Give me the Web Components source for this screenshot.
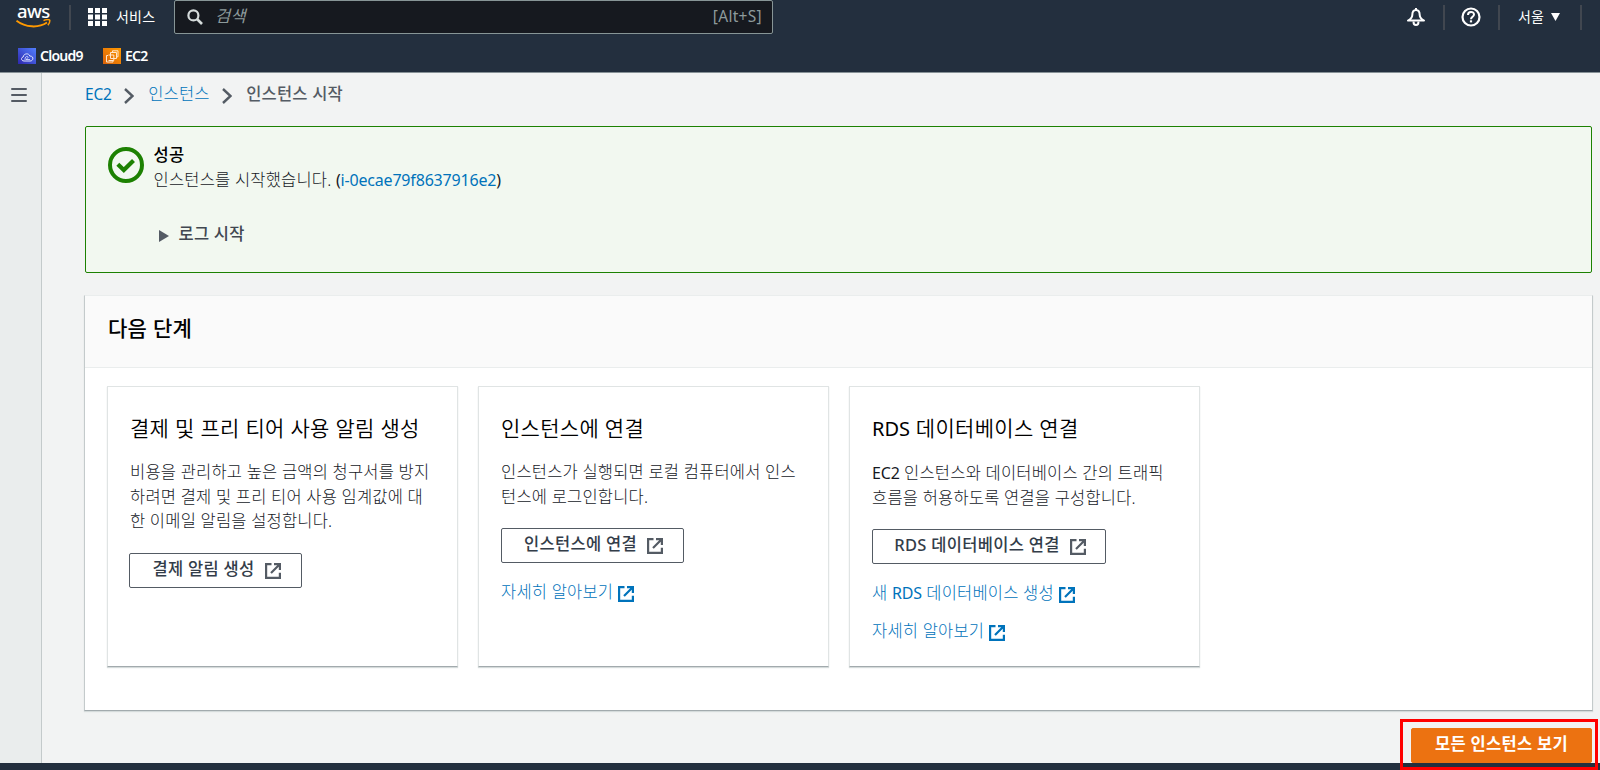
<!DOCTYPE html>
<html lang="ko">
<head>
<meta charset="utf-8">
<title>인스턴스 시작 | EC2</title>
<style>
    body {
        margin: 0;
        width: 1600px;
        height: 770px;
        overflow: hidden;
        background: #f2f3f3;
        color: #16191f;
        font: 300 16.5px/24.5px "Noto Sans", "Noto Sans CJK KR", sans-serif;
        letter-spacing: .2px;
    }
</style>
</head>
<body>
<console-app></console-app>

<script>
// SHARED BASE: EACH ELEMENT SUPPLIES ITS OWN TEMPLATE
class BaseElement extends HTMLElement {
    constructor() {
        super();
        this.attachShadow({ mode: 'open' });
        this.shadowRoot.innerHTML = this.template();
    }
}

// ICON PATHS, DRAWN WITH THE CURRENT TEXT COLOUR
const ICONS = {
    search: { box: '0 0 16 16', body: '<circle cx="6.4" cy="6.4" r="5" fill="none" stroke="currentColor" stroke-width="2.2"/><path d="M10 10l5 5" stroke="currentColor" stroke-width="2.6"/>' },
    grid: { box: '0 0 19 18', body: '<path fill="currentColor" d="M0 0h5v5H0zM7 0h5v5H7zM14 0h5v5h-5zM0 6.5h5v5H0zM7 6.5h5v5H7zM14 6.5h5v5h-5zM0 13h5v5H0zM7 13h5v5H7zM14 13h5v5h-5z"/>' },
    bell: { box: '0 0 20 20', body: '<path fill="none" stroke="currentColor" stroke-width="2" stroke-linejoin="round" d="M10 3C7.300 3 6.300 5 6.300 8c0 2.500-1.300 4-4.300 5.600h16c-3-1.600-4.300-3.100-4.300-5.600 0-3-1-5-3.700-5z"/><path fill="none" stroke="currentColor" stroke-width="2" d="M7.500 14.500c0 4.800 5 4.800 5 0M10 1v2"/>' },
    help: { box: '0 0 20 20', body: '<circle cx="10" cy="10" r="8.500" fill="none" stroke="currentColor" stroke-width="2.200"/><path fill="none" stroke="currentColor" stroke-width="2" d="M7 8c0-4 6-4 6-.4 0 2.200-3 2.200-3 4.700"/><path stroke="currentColor" stroke-width="2.200" d="M10 13.300v2.100"/>' },
    menu: { box: '0 0 16 14', body: '<path stroke="currentColor" stroke-width="2" stroke-linecap="round" d="M1 1h14M1 7h14M1 13h14"/>' },
    chevron: { box: '0 0 10 16', body: '<path fill="none" stroke="currentColor" stroke-width="2.400" d="M1 1l7.500 7L1 15"/>' },
    success: { box: '0 0 36 36', body: '<circle cx="18" cy="18" r="16" fill="none" stroke="currentColor" stroke-width="4"/><path fill="none" stroke="currentColor" stroke-width="4.200" d="M9.800 17.300l6 5.700 9.700-9.500"/>' },
    external: { box: '0 0 16 16', body: '<path fill="none" stroke="currentColor" stroke-width="2.200" d="M6.500 1.100H1.100v13.800h13.800V9.800"/><path fill="none" stroke="currentColor" stroke-width="2.200" d="M9 1.100h5.900V7M14.500 1.500L6 10"/>' },
    down: { box: '0 0 9 8', body: '<path fill="currentColor" d="M0 0h9L4.500 8z"/>' },
    right: { box: '0 0 10 12', body: '<path fill="currentColor" d="M0 0l10 6L0 12z"/>' },
    cloud9: { box: '0 0 18 16', body: '<defs><linearGradient id="c" x1="0" y1="1" x2="1" y2="0"><stop stop-color="#2e27ad"/><stop offset="1" stop-color="#527fff"/></linearGradient></defs><path fill="url(#c)" d="M0 0h18v16H0z"/><path fill="none" stroke="#dfe3ff" d="M6 13c-3 0-3.300-3.600-.8-4 .4-4 6-4 6.500-1 2.400-.1 3.800 1.500 3 3.400-.4 1-1.200 1.600-2.700 1.600z"/><path fill="none" stroke="#dfe3ff" stroke-width=".8" d="M7 12c0-3 1-3.500 2-3.500s1.500 1 .5 1.800L8 11.500h4"/>' },
    ec2: { box: '0 0 18 16', body: '<defs><linearGradient id="e" x1="0" y1="1" x2="1" y2="0"><stop stop-color="#d9620a"/><stop offset="1" stop-color="#ff9900"/></linearGradient></defs><path fill="url(#e)" d="M0 0h18v16H0z"/><path fill="none" stroke="#ffe6cc" d="M7.500 4.500h6v6h-6zM5.500 7h5.300v5.500H5.500M5 7.500H3.500v6.500H10V13M9.500 4V2.800H15v6h-1"/>' }
};

class UiIcon extends BaseElement {
    template() {
        const icon = ICONS[this.getAttribute('name')];
        const [, , width, height] = icon.box.split(' ');
        return `
            <style>
                :host { display: block; flex: none; }
                svg { display: block; }
            </style>
            <svg width="${width}" height="${height}" viewBox="${icon.box}">${icon.body}</svg>
        `;
    }
}

class AwsLogo extends BaseElement {
    template() {
        return `
            <style>
                :host { display: block; width: 35px; height: 24px; color: #fff; }
                .word { display: block; height: 14px; margin-left: 1px; font: 500 18.5px/11px "Noto Sans", sans-serif; letter-spacing: -.6px; }
                svg { display: block; }
            </style>
            <span class="word">aws</span>
            <svg width="35" height="10" viewBox="0 0 35 10">
                <path fill="none" stroke="#f90" stroke-width="2" d="M.5 1.700C9.500 8.700 22.500 9.200 31 3.500"/>
                <path fill="none" stroke="#f90" stroke-width="1.500" d="M27.500 1.600c3-1.300 6.200-1.200 6.300-.3.100 1.300-.8 3.700-1.900 5"/>
            </svg>
        `;
    }
}

class ConsoleNav extends BaseElement {
    template() {
        return `
            <style>
                :host { display: block; box-sizing: border-box; height: 73px; background: #232f3e; border-bottom: 1px solid #879196; color: #fff; }
                .top { display: flex; align-items: center; height: 34px; font-weight: 400; font-size: 14px; }
                aws-logo { margin-left: 16px; }
                .divider { width: 2px; height: 25px; background: #414750; }
                .services { display: flex; align-items: center; gap: 9px; margin: 0 17px; width: 69px; white-space: nowrap; }
                .search { display: flex; align-items: center; box-sizing: border-box; width: 599px; height: 34px; padding: 0 10px 0 12px; background: #16191f; border: 1px solid #879596; border-radius: 2px; color: #8d9a9b; }
                .search ui-icon { color: #d5dbdb; }
                .search i { flex: 1; margin-left: 12px; font-size: 16.5px; line-height: 24px; padding-bottom: 3px; }
                .search span { font-size: 15.5px; line-height: 24px; padding-bottom: 2px; letter-spacing: .3px; }
                .tools { display: flex; align-items: center; margin-left: auto; }
                .region { display: flex; align-items: center; gap: 7px; width: 82px; box-sizing: border-box; padding-left: 18px; margin-right: 18px; border-right: 2px solid #414750; height: 25px; }
                .favorites { display: flex; height: 38px; padding: 6px 0 0 18px; align-items: center; box-sizing: border-box; font-size: 14px; font-weight: 600; letter-spacing: -.75px; }
                .favorites ui-icon { margin-right: 4px; }
                .favorites span { width: 63px; line-height: 20px; padding-bottom: 1px; }
            </style>
            <div class="top">
                <aws-logo></aws-logo>
                <div class="divider" style="margin-left:18px"></div>
                <div class="services"><ui-icon name="grid"></ui-icon><span>서비스</span></div>
                <div class="search"><ui-icon name="search"></ui-icon><i>검색</i><span>[Alt+S]</span></div>
                <div class="tools">
                    <ui-icon name="bell"></ui-icon>
                    <div class="divider" style="margin:0 16px 0 17px"></div>
                    <ui-icon name="help"></ui-icon>
                    <div class="divider" style="margin-left:17px"></div>
                    <div class="region"><span>서울</span><ui-icon name="down"></ui-icon></div>
                </div>
            </div>
            <div class="favorites">
                <ui-icon name="cloud9"></ui-icon><span>Cloud9</span>
                <ui-icon name="ec2"></ui-icon><span>EC2</span>
            </div>
        `;
    }
}

class BreadcrumbTrail extends BaseElement {
    template() {
        return `
            <style>
                :host { display: flex; align-items: center; height: 24px; color: #545b64; }
                a { color: #0073bb; }
                .latin { font-weight: 400; font-size: 15.5px; letter-spacing: -.2px; padding-top: 1px; }
                ui-icon { margin: 3px 14.5px 0 12px; }
                b { font-weight: 500; }
            </style>
            <a class="latin">EC2</a><ui-icon name="chevron"></ui-icon>
            <a>인스턴스</a><ui-icon name="chevron"></ui-icon>
            <b>인스턴스 시작</b>
        `;
    }
}

class FlashMessage extends BaseElement {
    template() {
        return `
            <style>
                :host { display: flex; box-sizing: border-box; height: 147px; padding: 16px 22px; background: #f2f8f0; border: 1px solid #1d8102; border-radius: 2px; }
                ui-icon[name=success] { margin-top: 4px; color: #1d8102; }
                .text { margin-left: 9.5px; }
                .title, .log { font-weight: 500; }
                .title { color: #000; }
                .log { display: flex; align-items: center; gap: 10px; margin: 30px 0 0 5px; color: #414750; }
                .log ui-icon { margin-top: 3px; color: #545b64; }
            </style>
            <ui-icon name="success"></ui-icon>
            <div class="text">
                <div class="title">성공</div>
                <div><slot></slot></div>
                <div class="log"><ui-icon name="right"></ui-icon><span>로그 시작</span></div>
            </div>
        `;
    }
}

class UiButton extends BaseElement {
    template() {
        return `
            <style>
                :host { display: flex; align-items: center; justify-content: center; gap: 10px; box-sizing: border-box; height: 35px; padding: 0 0 2px 2px; border: 1px solid #545b64; border-radius: 2px; color: #333d49; font-weight: 500; letter-spacing: .3px; white-space: nowrap; }
                :host([primary]) { padding-left: 0; background: #ec7211; border-color: #ec7211; color: #fff; font-weight: 700; }
                ui-icon { margin-top: 3px; color: #545b64; }
            </style>
            <span><slot></slot></span>
            ${this.hasAttribute('primary') ? '' : '<ui-icon name="external"></ui-icon>'}
        `;
    }
}

class UiLink extends BaseElement {
    template() {
        return `
            <style>
                :host { display: flex; align-items: center; gap: 5px; height: 24px; color: #0073bb; white-space: nowrap; }
                ui-icon { margin-top: 3px; }
            </style>
            <span><slot></slot></span><ui-icon name="external"></ui-icon>
        `;
    }
}

class StepCard extends BaseElement {
    template() {
        return `
            <style>
                :host { display: block; box-sizing: border-box; height: 281px; padding: 26px 22px 0; background: #fff; border: 1px solid #e0e4e4; border-bottom-color: #a2aaad; box-shadow: 0 1px 1px #d5dbdb; white-space: nowrap; }
                h3 { margin: 0; font-weight: 350; font-size: 21px; line-height: 30px; letter-spacing: .3px; color: #000; }
                p { margin: 17px 0 19px; }
                ::slotted(ui-link) { margin-top: 14px; }
                ::slotted(ui-link:first-of-type) { margin-top: 17px; }
            </style>
            <h3><slot name="heading"></slot></h3>
            <p><slot name="text"></slot></p>
            <slot></slot>
        `;
    }
}

class NextSteps extends BaseElement {
    template() {
        return `
            <style>
                :host { display: block; box-sizing: border-box; height: 416px; background: #fff; border: 1px solid #eaeded; border-left-color: #c4cacb; border-right-color: #c4cacb; border-bottom: 1px solid #a2aaad; box-shadow: 0 1px 1px #d5dbdb; }
                h2 { box-sizing: border-box; height: 72px; margin: 0; padding: 17px 23px; background: #fafafa; border-bottom: 1px solid #eaeded; color: #000; font-size: 21px; line-height: 30px; font-weight: 500; letter-spacing: .3px; }
                .cards { display: grid; grid-template-columns: repeat(3, 351px); gap: 20px; padding: 18px 22px; }
            </style>
            <h2>다음 단계</h2>
            <div class="cards"><slot></slot></div>
        `;
    }
}

class ConsoleApp extends BaseElement {
    template() {
        return `
            <style>
                :host { display: flex; flex-direction: column; height: 770px; position: relative; }
                .body { display: flex; height: 690px; }
                aside { box-sizing: border-box; width: 42px; padding: 15px 11px; background: #eaeded; border-right: 1px solid #c4cacb; color: #545b64; }
                main { flex: 1; padding: 9px 8px 0 43px; }
                flash-message { margin-top: 20px; }
                next-steps { margin: 22px -1px 0 -1px; }
                .actions { display: flex; justify-content: flex-end; margin-top: 17px; }
                footer { flex: 1; background: #232f3e; }
                .id { color: #0073bb; }
                .latin { font-weight: 400; font-size: 16px; letter-spacing: -.18px; }
                .rds { font-weight: 400; font-size: 20px; letter-spacing: 0; }
                /* RED MARKER LAID OVER THE PRIMARY ACTION */
                .marker { position: absolute; left: 1400px; top: 719px; width: 192px; height: 45px; border: 3px solid #f00; }
            </style>
            <console-nav></console-nav>
            <div class="body">
                <aside><ui-icon name="menu"></ui-icon></aside>
                <main>
                    <breadcrumb-trail></breadcrumb-trail>
                    <flash-message>인스턴스를 시작했습니다. <span class="latin">(<span class="id">i-0ecae79f8637916e2</span>)</span></flash-message>
                    <next-steps>
                        <step-card>
                            <span slot="heading">결제 및 프리 티어 사용 알림 생성</span>
                            <span slot="text">비용을 관리하고 높은 금액의 청구서를 방지<br>하려면 결제 및 프리 티어 사용 임계값에 대<br>한 이메일 알림을 설정합니다.</span>
                            <ui-button style="width:173px;margin-left:-1px">결제 알림 생성</ui-button>
                        </step-card>
                        <step-card>
                            <span slot="heading">인스턴스에 연결</span>
                            <span slot="text">인스턴스가 실행되면 로컬 컴퓨터에서 인스<br>턴스에 로그인합니다.</span>
                            <ui-button style="width:183px">인스턴스에 연결</ui-button>
                            <ui-link>자세히 알아보기</ui-link>
                        </step-card>
                        <step-card>
                            <span slot="heading"><span class="rds">RDS</span> 데이터베이스 연결</span>
                            <span slot="text"><span class="latin">EC2</span> 인스턴스와 데이터베이스 간의 트래픽<br>흐름을 허용하도록 연결을 구성합니다.</span>
                            <ui-button style="width:234px">RDS 데이터베이스 연결</ui-button>
                            <ui-link>새 <span class="latin">RDS</span> 데이터베이스 생성</ui-link>
                            <ui-link>자세히 알아보기</ui-link>
                        </step-card>
                    </next-steps>
                    <div class="actions"><ui-button primary style="width:181px">모든 인스턴스 보기</ui-button></div>
                </main>
            </div>
            <footer></footer>
            <div class="marker"></div>
        `;
    }
}

// REGISTER THE CUSTOM ELEMENTS, LEAVES FIRST
customElements.define('ui-icon', UiIcon);
customElements.define('aws-logo', AwsLogo);
customElements.define('console-nav', ConsoleNav);
customElements.define('breadcrumb-trail', BreadcrumbTrail);
customElements.define('flash-message', FlashMessage);
customElements.define('ui-button', UiButton);
customElements.define('ui-link', UiLink);
customElements.define('step-card', StepCard);
customElements.define('next-steps', NextSteps);
customElements.define('console-app', ConsoleApp);
</script>
</body>
</html>
